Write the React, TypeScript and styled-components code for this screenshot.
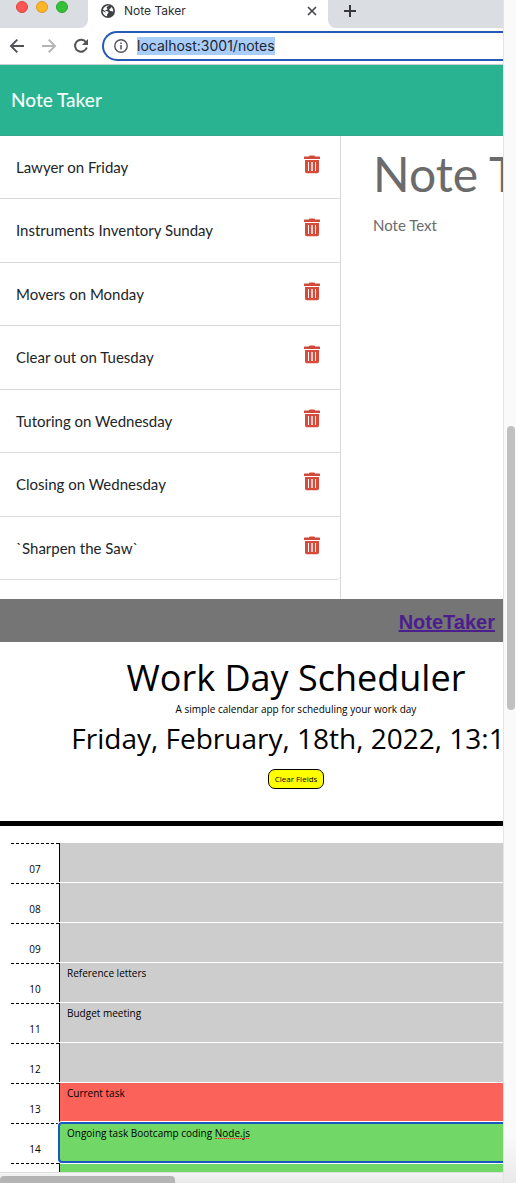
import React from "react";
import styled, { createGlobalStyle, css } from "styled-components";

const GlobalStyle = createGlobalStyle`
  *, *::before, *::after { box-sizing: border-box; }
  body { margin: 0; background: #fff; color: #000; font-family: "Open Sans", "Noto Sans", sans-serif; }
  button, input, textarea { font: inherit; color: inherit; }
`;

/* Window frame */

const Window = styled.div`
  display: grid;
  grid-template: minmax(0, 1fr) 11px / minmax(0, 1fr) 13px;
  height: 100vh;
  overflow: hidden;
`;

const Page = styled.main`
  overflow: hidden;
`;

const VerticalBar = styled.div`
  grid-row: span 2;
  display: grid;
  grid-template-rows: 426fr 284fr 473fr;
  padding: 0 1px 0 3px;
  border-left: 1px solid #e4e4e4;
  background: linear-gradient(#fafafa 96%, #e9e9e9);
`;

const VerticalThumb = styled.div`
  grid-row: 2;
  border-radius: 4px;
  background: #c1c1c1;
`;

const HorizontalBar = styled.div`
  display: grid;
  grid-template-columns: 175fr 328fr;
  padding-top: 3px;
  border-top: 1px solid #dedede;
  background: linear-gradient(#f4f4f4, #e9e9e9);
`;

const HorizontalThumb = styled.div`
  border-radius: 4px 4px 0 0;
  background: #b4b4b4;
`;

/* Browser */

const Browser = styled.section`
  font-family: Inter, Roboto, sans-serif;
`;

const TabStrip = styled.div`
  display: flex;
  height: 28px;
`;

const Lights = styled.div`
  display: flex;
  gap: 8px;
  width: 88px;
  padding: 1px 0 0 16px;
  border-bottom-right-radius: 8px;
  background: #dadde2;
`;

const Light = styled.span<{ $fill: string; $edge: string }>`
  width: 12px;
  height: 12px;
  border: 1px solid ${(p) => p.$edge};
  border-radius: 50%;
  background: ${(p) => p.$fill};
`;

const Tab = styled.div`
  display: flex;
  align-items: center;
  gap: 8px;
  width: 240px;
  height: 22px;
  padding: 0 10px 0 12px;
  color: #303135;
  font-size: 12px;
  line-height: 16px;
`;

const TabTitle = styled.span`
  flex: 1;
`;

const IconButton = styled.button`
  display: flex;
  padding: 0;
  border: 0;
  background: none;
`;

const StripRest = styled.div`
  flex: 1;
  padding: 4px 0 0 15px;
  border-bottom-left-radius: 8px;
  background: #dadde2;
`;

const Toolbar = styled.div`
  display: flex;
  align-items: center;
  gap: 16px;
  height: 37px;
  padding: 0 0 1px 9px;
  border-bottom: 1px solid #c9cfd2;
`;

const Omnibox = styled.label`
  display: flex;
  flex: 1;
  align-items: center;
  gap: 9px;
  height: 30px;
  margin-left: -3px;
  padding-left: 10px;
  border: 2px solid #2759b8;
  border-right: 0;
  border-radius: 15px 0 0 15px;
`;

const Address = styled.input`
  field-sizing: content;
  height: 18px;
  padding: 0;
  border: 0;
  outline: 0;
  background: #a9cdfb;
  color: #1c2530;
  font-size: 14px;
  line-height: 18px;
`;

/* Note taker */

const Notes = styled.section`
  font-family: Lato, sans-serif;
`;

const NotesHeader = styled.header`
  display: flex;
  align-items: center;
  height: 71px;
  padding-left: 11px;
  border-bottom: 1px solid #3aa689;
  background: #2ab391;
`;

const Brand = styled.a`
  color: #f4fffb;
  font-size: 19px;
  line-height: 24px;
  font-weight: 500;
  text-decoration: none;
`;

const NotesBody = styled.div`
  display: grid;
  grid-template-columns: 341px minmax(0, 1fr);
`;

const NoteList = styled.ul`
  margin: 0;
  padding: 0 0 19px;
  border-right: 1px solid #d9d9d9;
  list-style: none;
`;

const NoteItem = styled.li`
  display: flex;
  align-items: flex-start;
  justify-content: space-between;
  height: 63px;
  padding: 19px 20px 0 16px;
  border-bottom: 1px solid #d9d9d9;
  color: #212529;
  font-size: 15px;
  line-height: 24px;

  &:nth-child(even) {
    height: 64px;
  }

  &:last-child {
    border-bottom-right-radius: 4px;
  }
`;

const Editor = styled.form`
  display: flex;
  flex-direction: column;
  gap: 12px;
  padding: 9px 0 0 32px;
  overflow: hidden;
`;

const field = css`
  width: 400px;
  padding: 0;
  border: 0;
  outline: 0;
  resize: none;
  background: none;

  &::placeholder {
    color: #6b6b6b;
    opacity: 1;
  }
`;

const TitleField = styled.input`
  ${field}
  height: 58px;
  font-size: 48px;
  line-height: 58px;
`;

const TextField = styled.textarea`
  ${field}
  height: 48px;
  font-size: 15px;
  line-height: 20px;
`;

/* Scheduler */

const LinkBar = styled.nav`
  display: flex;
  align-items: center;
  justify-content: flex-end;
  height: 43px;
  padding: 2px 8px 0 0;
  background: #757575;
  font: bold 20px/24px "Liberation Sans", Arial, sans-serif;
`;

const ProjectLink = styled.a`
  color: #4c1d8c;
`;

const Scheduler = styled.section`
  min-width: 592px;
`;

const Jumbotron = styled.header`
  display: flex;
  flex-direction: column;
  align-items: center;
  padding: 12px 0 32px;
  border-bottom: 5px solid #000;
`;

const Title = styled.h1`
  margin: 0;
  font-size: 36px;
  line-height: 48px;
  font-weight: 400;
`;

const Lead = styled.p`
  margin: 0;
  font-size: 10px;
  line-height: 14px;
`;

const Today = styled.p`
  margin: 0;
  font-size: 28px;
  line-height: 44px;
`;

const ClearButton = styled.button`
  height: 20px;
  margin-top: 9px;
  padding: 0 6px;
  border: 1px solid #000;
  border-radius: 7px;
  background: #ff0;
  font-size: 8px;
  line-height: 16px;
`;

const Hours = styled.div`
  padding: 17px 0 0 11px;
`;

const HourRow = styled.div`
  display: grid;
  grid-template-columns: 48px minmax(0, 1fr);
  position: relative;
  height: 40px;
`;

const Hour = styled.label`
  padding-top: 18px;
  border-top: 1px dashed #000;
  font-size: 10px;
  line-height: 14px;
  text-align: center;
`;

type Phase = "past" | "present" | "future";

const phaseColor: Record<Phase, string> = {
  past: "#cdcdcd",
  present: "#fb6259",
  future: "#71d868",
};

const Task = styled.textarea<{ $phase: Phase; $active?: boolean }>`
  height: 39px;
  padding: 3px 7px;
  border: 0;
  border-left: 1px solid #000;
  outline: 0;
  resize: none;
  background: ${(p) => phaseColor[p.$phase]};
  font-size: 10px;
  line-height: 14px;
  ${(p) =>
    p.$active &&
    css`
      z-index: 1;
      border-radius: 3px;
      outline: 2px solid #1b57c3;
      outline-offset: -1px;
      box-shadow: 0 0 0 2px #fff;
    `}
`;

const SpellingMark = styled.span`
  position: absolute;
  z-index: 2;
  top: 15px;
  left: 204px;
  width: 34px;
  border-bottom: 1px dotted #e8301c;
`;

const TrashIcon = () => (
  <svg width="16" height="19" viewBox="0 0 16 19" aria-hidden="true">
    <path fill="#d0493b" d="M0 2.2Q0 1.6.6 1.6H4.8L5.4.8Q5.7.4 6.2.4H9.8Q10.3.4 10.6.8L11.2 1.6H15.4Q16 1.6 16 2.2V4H0Z" />
    <path fill="#d84a3a" fillRule="evenodd" d="M1 5H15V16.6Q15 18.2 13.4 18.2H2.6Q1 18.2 1 16.6ZM4 7V16H5V7ZM7.3 7V16H8.7V7ZM11 7V16H12V7Z" />
  </svg>
);

const GlobeIcon = () => (
  <svg width="16" height="16" viewBox="0 0 16 16" aria-hidden="true">
    <circle cx="8" cy="8" r="7" fill="#3f4145" />
    <path fill="#fff" d="M9.3 2.6C8.4 3.5 7 3.3 6.7 4.4 6.5 5.4 7.7 5.2 7.5 6.3 7.3 7.2 5.5 6.6 5.3 7.6 5.1 8.5 7.4 7.9 8.1 8.8 8.8 9.7 8.2 10.5 7.4 11 6.8 11.4 7.4 12.2 6.9 13.2 4.4 12.9 2.6 10.5 2.7 7.9L5.2 9.6 5.8 9.1 3 6.6C3.7 4.2 6.3 2.2 9.3 2.6ZM11 4.1C12.5 5 13.4 6.5 13.3 8.3 12.3 9.1 11.7 7.9 10.7 7.9 9.5 7.8 9 7 9.5 6.3 9.9 5.6 11.1 5.6 11 4.1Z" />
  </svg>
);

type StrokeProps = { size: number; d: string; color: string; width?: number };

const StrokeIcon = ({ size, d, color, width = 2 }: StrokeProps) => (
  <svg width={size} height={size} viewBox={`0 0 ${size} ${size}`} fill="none" stroke={color} strokeWidth={width} aria-hidden="true">
    <path d={d} />
  </svg>
);

const ReloadIcon = () => (
  <svg width="16" height="16" viewBox="0 0 16 16" fill="none" aria-hidden="true">
    <path d="M13 4.3A6 6 0 1 0 13.8 9.5" stroke="#515357" strokeWidth="2" />
    <path d="M15 1V7H9Z" fill="#515357" />
  </svg>
);

const InfoIcon = () => (
  <svg width="14" height="14" viewBox="0 0 14 14" fill="none" aria-hidden="true">
    <circle cx="7" cy="7" r="6.2" stroke="#505256" strokeWidth="1.4" />
    <path d="M7 6V10.4M7 3.4V4.9" stroke="#505256" strokeWidth="1.5" />
  </svg>
);

const notes = [
  "Lawyer on Friday",
  "Instruments Inventory Sunday",
  "Movers on Monday",
  "Clear out on Tuesday",
  "Tutoring on Wednesday",
  "Closing on Wednesday",
  "`Sharpen the Saw`",
];

const hours: { hour: string; task: string; phase: Phase; active?: boolean }[] = [
  { hour: "07", task: "", phase: "past" },
  { hour: "08", task: "", phase: "past" },
  { hour: "09", task: "", phase: "past" },
  { hour: "10", task: "Reference letters", phase: "past" },
  { hour: "11", task: "Budget meeting", phase: "past" },
  { hour: "12", task: "", phase: "past" },
  { hour: "13", task: "Current task", phase: "present" },
  { hour: "14", task: "Ongoing task Bootcamp coding Node.js", phase: "future", active: true },
  { hour: "", task: "", phase: "future" },
];

export default function App() {
  return (
    <Window>
      <GlobalStyle />
      <Page>
        <Browser>
          <TabStrip>
            <Lights>
              <Light $fill="#fc5753" $edge="#dd4540" />
              <Light $fill="#fdb528" $edge="#dd9a26" />
              <Light $fill="#33c236" $edge="#2aa52c" />
            </Lights>
            <Tab>
              <GlobeIcon />
              <TabTitle>Note Taker</TabTitle>
              <IconButton aria-label="Close tab">
                <StrokeIcon size={12} d="M2 2L10 10M10 2L2 10" color="#45474a" width={1.7} />
              </IconButton>
            </Tab>
            <StripRest>
              <IconButton aria-label="New tab">
                <StrokeIcon size={14} d="M7 1V13M1 7H13" color="#35373b" />
              </IconButton>
            </StripRest>
          </TabStrip>
          <Toolbar>
            <IconButton aria-label="Back">
              <StrokeIcon size={16} d="M15 8H2M8.3 1.6L2 8L8.3 14.4" color="#515357" />
            </IconButton>
            <IconButton aria-label="Forward">
              <StrokeIcon size={16} d="M1 8H14M7.7 1.6L14 8L7.7 14.4" color="#b4b5b7" />
            </IconButton>
            <IconButton aria-label="Reload">
              <ReloadIcon />
            </IconButton>
            <Omnibox>
              <InfoIcon />
              <Address aria-label="Address" spellCheck={false} defaultValue="localhost:3001/notes" />
            </Omnibox>
          </Toolbar>
        </Browser>

        <Notes>
          <NotesHeader>
            <Brand href="#">Note Taker</Brand>
          </NotesHeader>
          <NotesBody>
            <NoteList>
              {notes.map((note) => (
                <NoteItem key={note}>
                  <span>{note}</span>
                  <IconButton aria-label={`Delete ${note}`}>
                    <TrashIcon />
                  </IconButton>
                </NoteItem>
              ))}
            </NoteList>
            <Editor>
              <TitleField aria-label="Note Title" placeholder="Note Title" />
              <TextField aria-label="Note Text" placeholder="Note Text" />
            </Editor>
          </NotesBody>
        </Notes>

        <LinkBar>
          <ProjectLink href="#">NoteTaker</ProjectLink>
        </LinkBar>

        <Scheduler>
          <Jumbotron>
            <Title>Work Day Scheduler</Title>
            <Lead>A simple calendar app for scheduling your work day</Lead>
            <Today>Friday, February, 18th, 2022, 13:15</Today>
            <ClearButton>Clear Fields</ClearButton>
          </Jumbotron>
          <Hours>
            {hours.map(({ hour, task, phase, active }, i) => (
              <HourRow key={i}>
                <Hour htmlFor={`task-${i}`}>{hour}</Hour>
                <Task id={`task-${i}`} spellCheck={false} defaultValue={task} $phase={phase} $active={active} />
                {active && <SpellingMark />}
              </HourRow>
            ))}
          </Hours>
        </Scheduler>
      </Page>
      <VerticalBar>
        <VerticalThumb />
      </VerticalBar>
      <HorizontalBar>
        <HorizontalThumb />
      </HorizontalBar>
    </Window>
  );
}
